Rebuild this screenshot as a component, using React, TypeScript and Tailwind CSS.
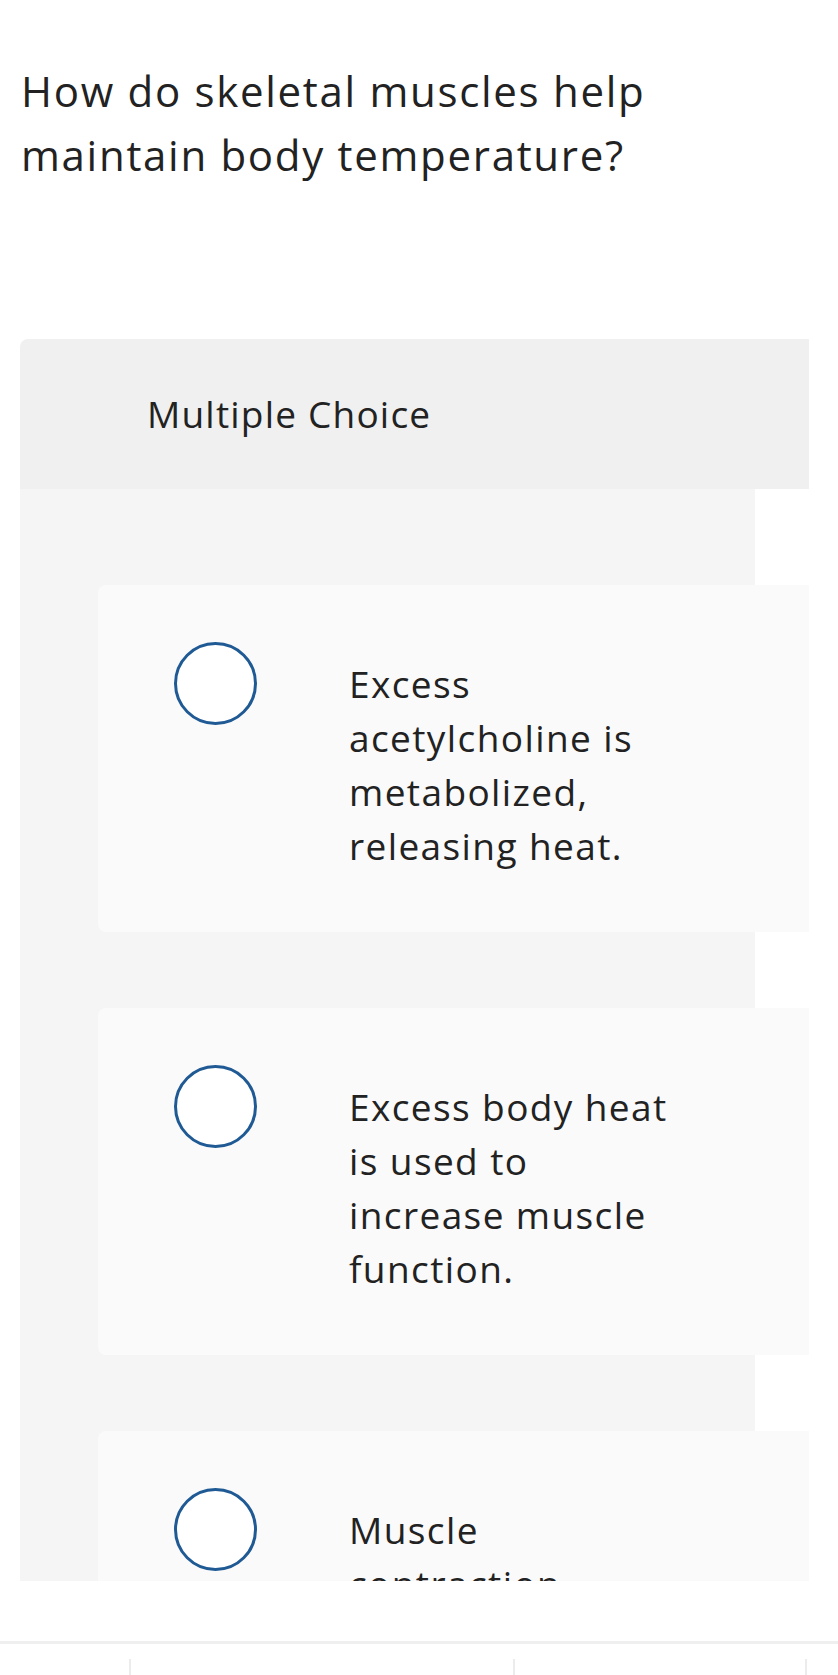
import React from "react";

const options = [
  "Excess acetylcholine is metabolized, releasing heat.",
  "Excess body heat is used to increase muscle function.",
  "Muscle contraction produces heat as a by-product.",
];

function Option({ text }: { text: string }) {
  return (
    <div className="w-[711px] shrink-0 rounded-l-[8px] bg-[#fafafa] pl-[76px] pt-[57px] pb-[59px] flex items-start gap-[92px]">
      <div className="w-[83px] h-[83px] shrink-0 rounded-full border-[3px] border-[#1f5a94] bg-white" />
      <div className="pt-[15px] w-[330px] text-[37px] leading-[54px] tracking-[1.4px] text-[#222222]">{text}</div>
    </div>
  );
}

export default function App() {
  return (
    <div className="w-[838px] h-[1675px] bg-white flex flex-col overflow-hidden font-['Open_Sans','Liberation_Sans',sans-serif] [font-variant-ligatures:none]">
      {/* scrollable question area */}
      <div className="h-[1581px] overflow-hidden shrink-0">
        <h1 className="pt-[59px] px-[21px] text-[42px] leading-[64px] tracking-[1.7px] text-[#222222] font-normal">
          How do skeletal muscles help
          <br />
          maintain body temperature?
        </h1>

        <div className="mt-[152px] ml-[20px] w-[789px] overflow-hidden rounded-tl-[8px]">
          <div className="h-[150px] bg-[#f0f0f0] flex items-center pl-[127px] text-[37px] tracking-[1.2px] text-[#222222]">
            Multiple Choice
          </div>
          <div className="w-[735px] bg-[#f5f5f5] pl-[78px] pt-[96px] pb-[76px] flex flex-col gap-[76px]">
            {options.map((o) => (
              <Option key={o} text={o} />
            ))}
          </div>
        </div>
      </div>

      {/* bottom bar */}
      <div className="mt-[60px] border-t-[3px] border-[#efefef] pt-[15px] flex h-full">
        <div className="w-[129px]" />
        <div className="w-[384px] border-l-2 border-[#ececec]" />
        <div className="w-[292px] border-l-2 border-[#ececec]" />
        <div className="flex-1 border-l-2 border-[#ececec]" />
      </div>
    </div>
  );
}
